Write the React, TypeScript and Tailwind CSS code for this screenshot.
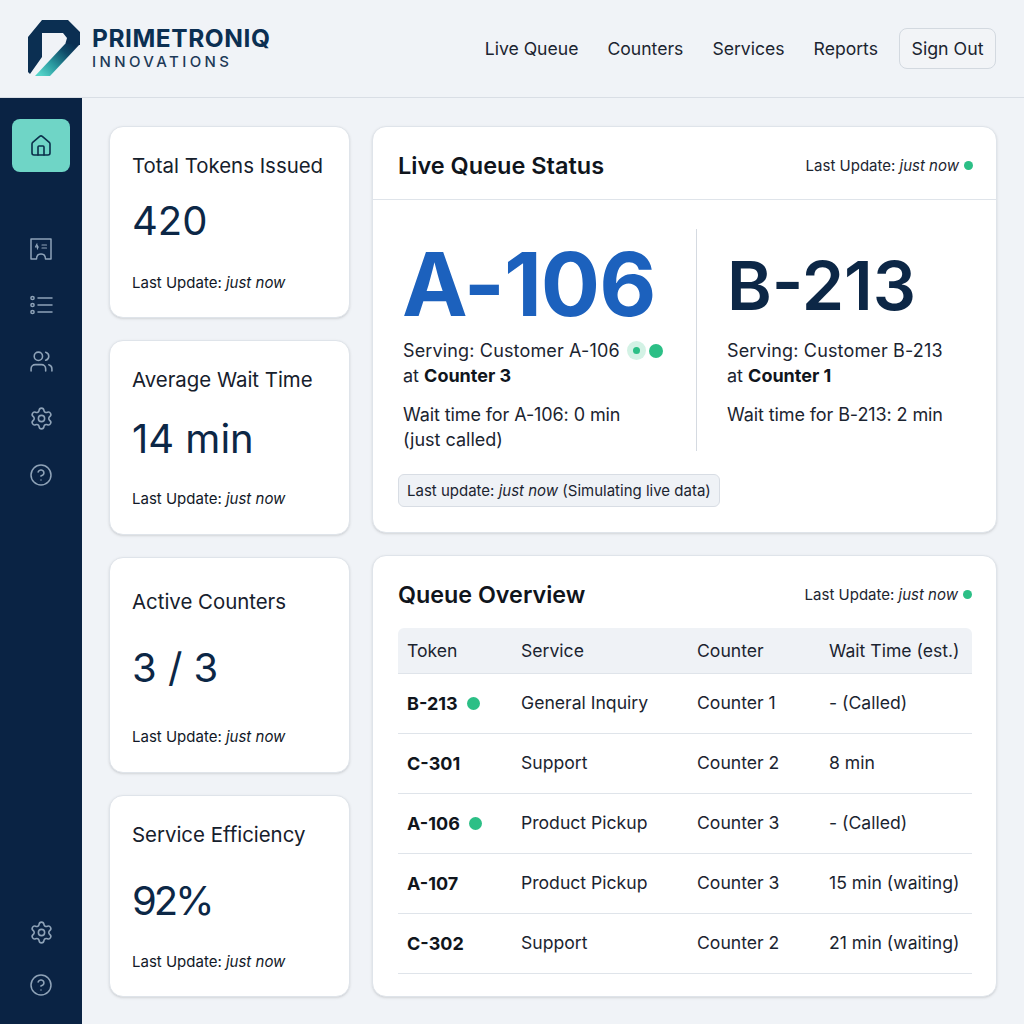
import { Home, Users, Settings, CircleHelp } from "lucide-react";

const stats = [
  { title: "Total Tokens Issued", value: "420", height: "h-[192px]", titleMt: "mt-[26px]", valueMt: "mt-[17px]", footMt: "mt-[27px]", valueClass: "" },
  { title: "Average Wait Time", value: "14 min", height: "h-[195px]", titleMt: "mt-[26px]", valueMt: "mt-[21px]", footMt: "mt-[25px]", valueClass: "" },
  { title: "Active Counters", value: "3 / 3", height: "h-[216px]", titleMt: "mt-[31px]", valueMt: "mt-[28px]", footMt: "mt-[34px]", valueClass: "" },
  { title: "Service Efficiency", value: "92%", height: "h-[202px]", titleMt: "mt-[26px]", valueMt: "mt-[28px]", footMt: "mt-[26px]", valueClass: "tracking-[-3px]" },
];

const rows = [
  { token: "B-213", live: true, service: "General Inquiry", counter: "Counter 1", wait: "- (Called)" },
  { token: "C-301", live: false, service: "Support", counter: "Counter 2", wait: "8 min" },
  { token: "A-106", live: true, service: "Product Pickup", counter: "Counter 3", wait: "- (Called)" },
  { token: "A-107", live: false, service: "Product Pickup", counter: "Counter 3", wait: "15 min (waiting)" },
  { token: "C-302", live: false, service: "Support", counter: "Counter 2", wait: "21 min (waiting)" },
];

function Logo() {
  return (
    <svg width="54" height="60" viewBox="0 0 54 60" className="shrink-0">
      <defs>
        <linearGradient id="band" gradientUnits="userSpaceOnUse" x1="46" y1="25" x2="15" y2="57">
          <stop offset="0" stopColor="#0b2f52" />
          <stop offset="0.25" stopColor="#0f4a68" />
          <stop offset="0.65" stopColor="#2a9aa0" />
          <stop offset="1" stopColor="#54d3c8" />
        </linearGradient>
      </defs>
      <path d="M1 18 L15 1 H41 L53 13 V26 L38 26 L40 19 L36 14 H15 V38 L3 55 L1 53 Z" fill="#0b2f52" />
      <path d="M38 25 L53 25 L23 57 L8 57 Z" fill="url(#band)" />
    </svg>
  );
}

function TicketIcon() {
  return (
    <svg width="24" height="24" viewBox="0 0 24 24" fill="none" stroke="#8fa3b8" strokeWidth="1.5" strokeLinejoin="round" strokeLinecap="round">
      <path d="M2 2 H22 V22 H16.5 C16.5 18.5 14.5 17 12 17 C9.5 17 7.5 18.5 7.5 22 H2 Z" />
      <path d="M8 7 L6.5 10 H9.5 M8.5 8.5 V12 M13 8 H17.5 M13 11 H17.5" strokeWidth="1.2" />
    </svg>
  );
}

function BulletListIcon() {
  return (
    <svg width="24" height="24" viewBox="0 0 24 24" fill="none" stroke="#8fa3b8" strokeWidth="1.5" strokeLinecap="round">
      <circle cx="3.5" cy="5" r="1.6" />
      <circle cx="3.5" cy="12" r="1.6" />
      <circle cx="3.5" cy="19" r="1.6" />
      <path d="M9 5 H23 M9 12 H23 M9 19 H23" />
    </svg>
  );
}

function Dot({ className = "" }: { className?: string }) {
  return <span className={`inline-block rounded-full bg-[#2cbf86] ${className}`} />;
}

function LastUpdate() {
  return (
    <div className="flex items-center text-[15px] leading-[18px] text-[#1d2530]">
      <span>
        Last Update: <em>just now</em>
      </span>
      <span className="ml-[5px] w-[9px] h-[9px] rounded-full bg-[#2cbf86]" />
    </div>
  );
}

function StatCard({ s }: { s: (typeof stats)[number] }) {
  return (
    <div className={`${s.height} rounded-[14px] bg-white border border-[#dfe4ea] shadow-sm pl-[22px] pr-[10px] flow-root`}>
      <div className={`${s.titleMt} text-[20.4px] leading-[26px] text-[#16202c] whitespace-nowrap`}>{s.title}</div>
      <div className={`${s.valueMt} text-[40px] leading-[50px] text-[#0c2746] ${s.valueClass}`}>{s.value}</div>
      <div className={`${s.footMt} text-[15px] leading-[20px] text-[#111827]`}>
        Last Update: <em>just now</em>
      </div>
    </div>
  );
}

export default function App() {
  return (
    <div className="w-[1024px] h-[1024px] overflow-hidden flex flex-col bg-[#f0f3f7] font-['Inter',sans-serif]">
      <header className="h-[98px] shrink-0 border-b border-[#d9dee5] bg-[#f0f3f7] flex items-center pl-[27px] pr-[28px]">
        <Logo />
        <div className="ml-[11px] mt-[-1px]">
          <div className="text-[24.5px] leading-[27px] font-bold text-[#0b2f52] tracking-[0.55px]">PRIMETRONIQ</div>
          <div className="text-[15px] leading-[18px] mt-[1px] font-medium text-[#1d3a58] tracking-[3.4px]">INNOVATIONS</div>
        </div>
        <nav className="ml-auto flex items-center text-[17.6px] text-[#1b2430]">
          <span className="mt-[2px]">Live Queue</span>
          <span className="ml-[29px] mt-[2px]">Counters</span>
          <span className="ml-[29px] mt-[2px]">Services</span>
          <span className="ml-[29px] mt-[2px]">Reports</span>
          <button className="ml-[21px] h-[41px] w-[97px] pt-[1px] rounded-[8px] border border-[#d3d9e0] bg-[#f2f4f7] text-[17.8px] text-[#1b2430]">Sign Out</button>
        </nav>
      </header>

      <div className="flex flex-1 min-h-0">
        <aside className="w-[82px] shrink-0 bg-[#0a2344] flex flex-col items-center pt-[21px] pb-[27px] text-[#8fa3b8]">
          <div className="w-[58px] h-[53px] rounded-[8px] bg-[#6fd5c6] flex items-center justify-center text-[#0b2f4a]">
            <Home size={24} strokeWidth={1.6} />
          </div>
          <div className="mt-[65px] flex flex-col items-center gap-[32px]">
            <TicketIcon />
            <BulletListIcon />
            <Users size={25} strokeWidth={1.5} />
            <Settings size={25} strokeWidth={1.5} />
            <CircleHelp size={24} strokeWidth={1.5} />
          </div>
          <div className="mt-auto flex flex-col items-center gap-[28px]">
            <Settings size={25} strokeWidth={1.5} />
            <CircleHelp size={24} strokeWidth={1.5} />
          </div>
        </aside>

        <main className="flex-1 min-w-0 flex gap-[22px] pt-[28px] pl-[27px] pr-[27px]">
          <div className="w-[241px] shrink-0 flex flex-col gap-[22px]">
            {stats.map((s) => (
              <StatCard key={s.title} s={s} />
            ))}
          </div>

          <div className="flex-1 min-w-0 flex flex-col gap-[22px]">
            <section className="h-[407px] rounded-[14px] bg-white border border-[#dfe4ea] shadow-sm">
              <div className="h-[73px] border-b border-[#dfe4ea] flex items-center justify-between pl-[25px] pr-[23px] pt-[5px]">
                <h2 className="text-[23.5px] font-semibold text-[#10151c]">Live Queue Status</h2>
                <LastUpdate />
              </div>
              <div className="flex pt-[29px] pl-[30px]">
                <div className="w-[294px] h-[222px] border-r border-[#d5dae1]">
                  <div className="text-[88px] leading-[100px] font-bold text-[#1c61bd] ml-[-1px] mt-[5px] tracking-[-1px]">A-106</div>
                  <div className="mt-[4px] text-[18px] leading-[25px] text-[#1b2430]">
                    <div className="flex items-center tracking-[0.15px]">
                      Serving: Customer A-106
                      <span className="ml-[7px] w-[19px] h-[19px] rounded-full bg-[#d3f2e5] flex items-center justify-center">
                        <span className="w-[7px] h-[7px] rounded-full bg-[#2cbf86]" />
                      </span>
                      <Dot className="ml-[3px] w-[14px] h-[14px]" />
                    </div>
                    <div>
                      at <b className="text-[#10151c]">Counter 3</b>
                    </div>
                    <div className="mt-[14px] tracking-[-0.1px]">Wait time for A-106: 0 min</div>
                    <div>(just called)</div>
                  </div>
                </div>
                <div className="pl-[30px]">
                  <div className="text-[68px] leading-[100px] font-semibold text-[#0c2746] mt-[6px]">B-213</div>
                  <div className="mt-[3px] text-[18px] leading-[25px] text-[#1b2430]">
                    <div className="tracking-[0.15px]">Serving: Customer B-213</div>
                    <div>
                      at <b className="text-[#10151c]">Counter 1</b>
                    </div>
                    <div className="mt-[14px] tracking-[-0.1px]">Wait time for B-213: 2 min</div>
                  </div>
                </div>
              </div>
              <div className="ml-[25px] mt-[23px] w-fit h-[33px] px-[8px] pt-[1px] flex items-center rounded-[6px] border border-[#d8dde4] bg-[#eff2f6] text-[15px] text-[#1b2430]">
                <span>
                  Last update: <em>just now</em> (Simulating live data)
                </span>
              </div>
            </section>

            <section className="h-[442px] rounded-[14px] bg-white border border-[#dfe4ea] shadow-sm px-[25px]">
              <div className="h-[72px] flex items-center justify-between pt-[5px] mr-[-1px]">
                <h2 className="text-[23.3px] pt-[1px] font-semibold text-[#10151c]">Queue Overview</h2>
                <LastUpdate />
              </div>
              <table className="w-[574px] table-fixed text-[17.6px] text-[#1b2430]">
                <colgroup>
                  <col className="w-[123px]" />
                  <col className="w-[176px]" />
                  <col className="w-[132px]" />
                  <col />
                </colgroup>
                <thead>
                  <tr className="h-[45px] bg-[#eff2f6] border-b border-[#dfe4ea] text-left">
                    <th className="pl-[9px] pt-[1px] font-normal rounded-tl-[6px]">Token</th>
                    <th className="pt-[1px] font-normal">Service</th>
                    <th className="pt-[1px] font-normal">Counter</th>
                    <th className="pt-[1px] font-normal rounded-tr-[6px]">Wait Time (est.)</th>
                  </tr>
                </thead>
                <tbody>
                  {rows.map((r) => (
                    <tr key={r.token} className="h-[60px] border-b border-[#dfe4ea]">
                      <td className="pl-[9px]">
                        <span className="flex items-center text-[18px] font-bold text-[#10151c]">
                          {r.token}
                          {r.live && <Dot className="ml-[9px] w-[13px] h-[13px]" />}
                        </span>
                      </td>
                      <td className="pt-[1px]">{r.service}</td>
                      <td className="pt-[1px]">{r.counter}</td>
                      <td className="pt-[1px] whitespace-nowrap">{r.wait}</td>
                    </tr>
                  ))}
                </tbody>
              </table>
            </section>
          </div>
        </main>
      </div>
    </div>
  );
}
